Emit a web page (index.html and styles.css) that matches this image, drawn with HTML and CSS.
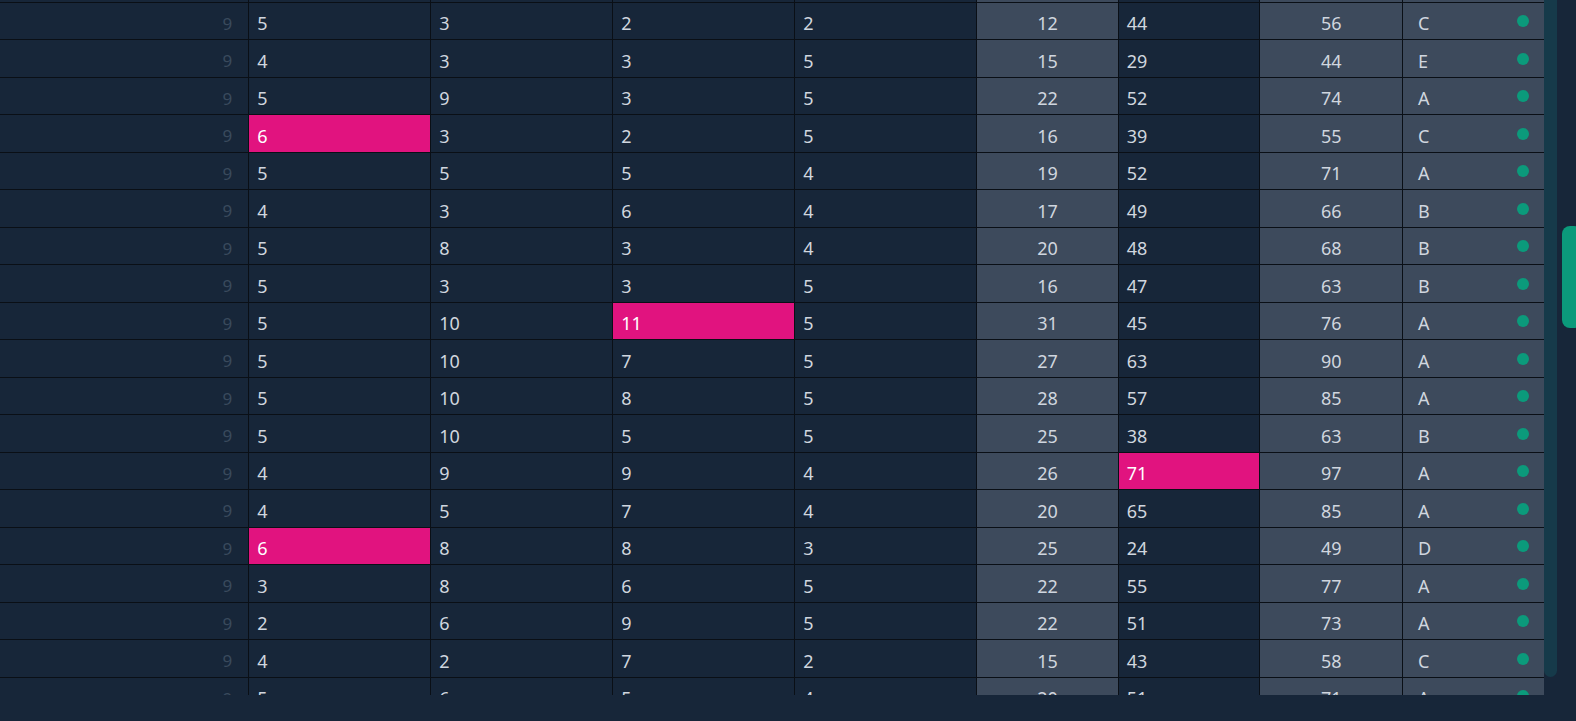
FILE: index.html
```html
<!DOCTYPE html>
<html lang="en">
<head>
<meta charset="utf-8">
<title>Scores grid</title>
<link rel="stylesheet" href="styles.css">
</head>
<body>
<div class="frame">
  <div class="viewport">
    <div class="grid">
      <div class="row"><div class="c num"></div><div class="c"></div><div class="c"></div><div class="c"></div><div class="c"></div><div class="c lt ctr"></div><div class="c"></div><div class="c lt ctr"></div><div class="c lt st"></div></div>
      <div class="row"><div class="c num">9</div><div class="c">5</div><div class="c">3</div><div class="c">2</div><div class="c">2</div><div class="c lt ctr">12</div><div class="c">44</div><div class="c lt ctr">56</div><div class="c lt st"><span>C</span><i class="dot"></i></div></div>
      <div class="row"><div class="c num">9</div><div class="c">4</div><div class="c">3</div><div class="c">3</div><div class="c">5</div><div class="c lt ctr">15</div><div class="c">29</div><div class="c lt ctr">44</div><div class="c lt st"><span>E</span><i class="dot"></i></div></div>
      <div class="row"><div class="c num">9</div><div class="c">5</div><div class="c">9</div><div class="c">3</div><div class="c">5</div><div class="c lt ctr">22</div><div class="c">52</div><div class="c lt ctr">74</div><div class="c lt st"><span>A</span><i class="dot"></i></div></div>
      <div class="row"><div class="c num">9</div><div class="c hot">6</div><div class="c">3</div><div class="c">2</div><div class="c">5</div><div class="c lt ctr">16</div><div class="c">39</div><div class="c lt ctr">55</div><div class="c lt st"><span>C</span><i class="dot"></i></div></div>
      <div class="row"><div class="c num">9</div><div class="c">5</div><div class="c">5</div><div class="c">5</div><div class="c">4</div><div class="c lt ctr">19</div><div class="c">52</div><div class="c lt ctr">71</div><div class="c lt st"><span>A</span><i class="dot"></i></div></div>
      <div class="row"><div class="c num">9</div><div class="c">4</div><div class="c">3</div><div class="c">6</div><div class="c">4</div><div class="c lt ctr">17</div><div class="c">49</div><div class="c lt ctr">66</div><div class="c lt st"><span>B</span><i class="dot"></i></div></div>
      <div class="row"><div class="c num">9</div><div class="c">5</div><div class="c">8</div><div class="c">3</div><div class="c">4</div><div class="c lt ctr">20</div><div class="c">48</div><div class="c lt ctr">68</div><div class="c lt st"><span>B</span><i class="dot"></i></div></div>
      <div class="row"><div class="c num">9</div><div class="c">5</div><div class="c">3</div><div class="c">3</div><div class="c">5</div><div class="c lt ctr">16</div><div class="c">47</div><div class="c lt ctr">63</div><div class="c lt st"><span>B</span><i class="dot"></i></div></div>
      <div class="row"><div class="c num">9</div><div class="c">5</div><div class="c">10</div><div class="c hot">11</div><div class="c">5</div><div class="c lt ctr">31</div><div class="c">45</div><div class="c lt ctr">76</div><div class="c lt st"><span>A</span><i class="dot"></i></div></div>
      <div class="row"><div class="c num">9</div><div class="c">5</div><div class="c">10</div><div class="c">7</div><div class="c">5</div><div class="c lt ctr">27</div><div class="c">63</div><div class="c lt ctr">90</div><div class="c lt st"><span>A</span><i class="dot"></i></div></div>
      <div class="row"><div class="c num">9</div><div class="c">5</div><div class="c">10</div><div class="c">8</div><div class="c">5</div><div class="c lt ctr">28</div><div class="c">57</div><div class="c lt ctr">85</div><div class="c lt st"><span>A</span><i class="dot"></i></div></div>
      <div class="row"><div class="c num">9</div><div class="c">5</div><div class="c">10</div><div class="c">5</div><div class="c">5</div><div class="c lt ctr">25</div><div class="c">38</div><div class="c lt ctr">63</div><div class="c lt st"><span>B</span><i class="dot"></i></div></div>
      <div class="row"><div class="c num">9</div><div class="c">4</div><div class="c">9</div><div class="c">9</div><div class="c">4</div><div class="c lt ctr">26</div><div class="c hot">71</div><div class="c lt ctr">97</div><div class="c lt st"><span>A</span><i class="dot"></i></div></div>
      <div class="row"><div class="c num">9</div><div class="c">4</div><div class="c">5</div><div class="c">7</div><div class="c">4</div><div class="c lt ctr">20</div><div class="c">65</div><div class="c lt ctr">85</div><div class="c lt st"><span>A</span><i class="dot"></i></div></div>
      <div class="row"><div class="c num">9</div><div class="c hot">6</div><div class="c">8</div><div class="c">8</div><div class="c">3</div><div class="c lt ctr">25</div><div class="c">24</div><div class="c lt ctr">49</div><div class="c lt st"><span>D</span><i class="dot"></i></div></div>
      <div class="row"><div class="c num">9</div><div class="c">3</div><div class="c">8</div><div class="c">6</div><div class="c">5</div><div class="c lt ctr">22</div><div class="c">55</div><div class="c lt ctr">77</div><div class="c lt st"><span>A</span><i class="dot"></i></div></div>
      <div class="row"><div class="c num">9</div><div class="c">2</div><div class="c">6</div><div class="c">9</div><div class="c">5</div><div class="c lt ctr">22</div><div class="c">51</div><div class="c lt ctr">73</div><div class="c lt st"><span>A</span><i class="dot"></i></div></div>
      <div class="row"><div class="c num">9</div><div class="c">4</div><div class="c">2</div><div class="c">7</div><div class="c">2</div><div class="c lt ctr">15</div><div class="c">43</div><div class="c lt ctr">58</div><div class="c lt st"><span>C</span><i class="dot"></i></div></div>
      <div class="row"><div class="c num">9</div><div class="c">5</div><div class="c">6</div><div class="c">5</div><div class="c">4</div><div class="c lt ctr">20</div><div class="c">51</div><div class="c lt ctr">71</div><div class="c lt st"><span>A</span><i class="dot"></i></div></div>
    </div>
  </div>
  <div class="track"></div>
</div>
<div class="thumb"></div>
</body>
</html>
```

FILE: styles.css
```css
html, body {
  margin: 0;
  padding: 0;
}
body {
  background: #172639;
  width: 1576px;
  height: 721px;
  overflow: hidden;
  position: relative;
  font-family: "Noto Sans", "Open Sans", sans-serif;
}
.frame {
  display: flex;
  align-items: flex-start;
  height: 695px;
}
.viewport {
  width: 1544px;
  height: 695px;
  overflow: hidden;
  flex: none;
}
.grid {
  margin-top: -35px;
}
.row {
  display: grid;
  grid-template-columns: 248.3px 182px 182px 182px 182px 141.5px 141.6px 142.7px 141.9px;
  height: 37.5px;
  box-sizing: border-box;
  border-bottom: 1px solid #0a0f16;
}
.c {
  box-sizing: border-box;
  border-left: 1px solid #0a0f16;
  display: flex;
  align-items: center;
  padding: 5px 8px 0 8px;
  font-size: 18px;
  color: #d0d6df;
  background: #172639;
  white-space: nowrap;
}
.c.num {
  border-left: none;
  justify-content: flex-end;
  padding-right: 16px;
  font-size: 17px;
  color: #3a4a5d;
}
.c.lt {
  background: #3d4a5c;
}
.c.ctr {
  justify-content: center;
}
.c.hot {
  background: #e1137f;
  color: #ffffff;
}
.c.st {
  justify-content: space-between;
  padding-left: 15px;
  padding-right: 15px;
}
.dot {
  display: block;
  width: 12px;
  height: 12px;
  border-radius: 50%;
  background: #0b9a7b;
  margin-top: -4px;
}
.track {
  flex: none;
  width: 13px;
  height: 677px;
  background: #163a4a;
  border-radius: 0 0 7px 7px;
}
.thumb {
  position: absolute;
  left: 1562px;
  top: 226px;
  width: 20px;
  height: 102px;
  background: #0b9a7b;
  border-radius: 8px;
}
```
